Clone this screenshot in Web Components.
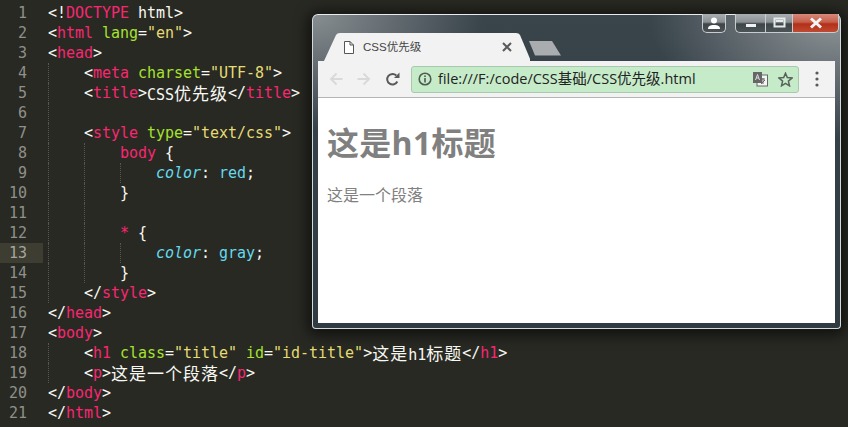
<!DOCTYPE html>
<html lang="zh"><head><meta charset="utf-8"><title>CSS优先级</title>
<style>html,body{margin:0;padding:0;background:#282923;width:848px;height:427px;overflow:hidden}</style>
</head><body>
<app-desktop>
  <code-editor></code-editor>
  <browser-window slot="window" tab="CSS优先级" url="file:///F:/code/CSS基础/CSS优先级.html">
    <page-content></page-content>
  </browser-window>
</app-desktop>
<script>
const LINES=[
 [0,[['p','<!'],['k','DOCTYPE'],['w',' html'],['p','>']]],
 [0,[['p','<'],['k','html'],['a',' lang'],['p','='],['s','"en"'],['p','>']]],
 [0,[['p','<'],['k','head'],['p','>']]],
 [1,[['p','<'],['k','meta'],['a',' charset'],['p','='],['s','"UTF-8"'],['p','>']]],
 [1,[['p','<'],['k','title'],['p','>'],['w','CSS优先级'],['p','</'],['k','title'],['p','>']]],
 [1,[]],
 [1,[['p','<'],['k','style'],['a',' type'],['p','='],['s','"text/css"'],['p','>']]],
 [2,[['k','body'],['w',' {']]],
 [3,[['i','color'],['w',': '],['c','red'],['w',';']]],
 [2,[['w','}']]],
 [2,[]],
 [2,[['k','*'],['w',' {']]],
 [3,[['i','color'],['w',': '],['c','gray'],['w',';']]],
 [2,[['w','}']]],
 [1,[['p','</'],['k','style'],['p','>']]],
 [0,[['p','</'],['k','head'],['p','>']]],
 [0,[['p','<'],['k','body'],['p','>']]],
 [1,[['p','<'],['k','h1'],['a',' class'],['p','='],['s','"title"'],['a',' id'],['p','='],['s','"id-title"'],['p','>'],['w','这是h1标题'],['p','</'],['k','h1'],['p','>']]],
 [1,[['p','<'],['k','p'],['p','>'],['w','这是一个段落'],['p','</'],['k','p'],['p','>']]],
 [0,[['p','</'],['k','body'],['p','>']]],
 [0,[['p','</'],['k','html'],['p','>']]],
];
const esc=s=>s.replace(/&/g,'&amp;').replace(/</g,'&lt;');
const cjk=s=>esc(s).replace(/[\u4e00-\u9fff]+/g,m=>`<span class="z">${m}</span>`);

class AppDesktop extends HTMLElement{
  constructor(){super();this.attachShadow({mode:'open'}).innerHTML=`<style>
  :host{display:block;position:relative;width:848px;height:427px;overflow:hidden;background:#282923}
  ::slotted(browser-window){position:absolute;left:312px;top:14px}
  </style><slot></slot><slot name="window"></slot>`}
}
class CodeEditor extends HTMLElement{
  constructor(){super();
    const rows=LINES.map(([ind,toks],i)=>{
      const guides='<i class="g"></i>'.repeat(ind);
      const code=toks.map(([c,t])=>`<span class="${c}">${cjk(t)}</span>`).join('');
      return `<div class="row${i==12?' cur':''}"><div class="n">${i+1}</div><div class="t">${guides}${code}</div></div>`;
    }).join('');
    this.attachShadow({mode:'open'}).innerHTML=`<style>
    :host{display:block;padding-top:3px;font:15px/20px "DejaVu Sans Mono","Noto Sans CJK SC",monospace;color:#f8f8f2;letter-spacing:-.03px}
    .row{display:flex;height:20px;white-space:pre}
    .n{width:27px;flex:none;text-align:right;color:#8f908a;margin-right:21px;font-size:15px}
    .cur .n{color:#a5a69f}
    .cur{background:linear-gradient(90deg,#3e3d32 0 43px,transparent 43px)}
    .t{display:flex;flex:1}
    .t span{display:inline-block}
    .g{display:block;width:36px;height:20px;flex:none;box-sizing:border-box;border-left:1px dotted #55564f}
    .k{color:#f92672}.a{color:#a6e22e}.s{color:#e6db74}.p,.w{color:#f8f8f2}
    .i{color:#66d9ef;font-style:italic}.c{color:#66d9ef}
    .z{font-family:"Noto Sans CJK SC",sans-serif;font-size:17px;letter-spacing:1px}
    </style>${rows}`;
  }
}
class BrowserWindow extends HTMLElement{
  constructor(){super();
    const tab=this.getAttribute('tab'),url=this.getAttribute('url');
    this.attachShadow({mode:'open'}).innerHTML=`<style>
    :host{display:block;position:relative;width:529px;height:315px;box-sizing:border-box;border-radius:6px 6px 4px 4px;border:1px solid #d3d8da;border-top-color:#e8ecee;
      box-shadow:0 2px 14px 4px rgba(0,0,0,.6);
      background:
       radial-gradient(170px 115px at 0 0,rgba(155,160,163,.8),rgba(155,160,163,0)),
       radial-gradient(190px 125px at 100% 0,rgba(155,160,163,.9),rgba(155,160,163,0)),
       linear-gradient(180deg,#39444b 0,#2f3a41 100%);
      padding:18px 5px 5px 5px;font-family:"Open Sans","Noto Sans CJK SC",sans-serif}
    .strip{position:relative;display:flex;height:28px;align-items:flex-end;padding-left:6px}
    .tab{position:relative;width:206px;height:28px;flex:none}
    .tab svg.shape{position:absolute;inset:0}
    .tabc{position:absolute;inset:0;display:flex;align-items:center;padding-left:20px;box-sizing:border-box}
    .title{font:11.500px/14px "Liberation Sans","Noto Sans CJK SC",sans-serif;color:#444;margin-left:9px;width:139px}
    .newtab{position:absolute;left:210px;top:7px}
    .tool{height:36px;background:#f2f2f2;border-bottom:1px solid #b4b4b4;display:flex;align-items:center;padding-left:11px}
    .nav{display:flex;align-items:center;gap:14px;width:82px;flex:none}
    .box{width:388px;height:27px;box-sizing:border-box;border:1px solid #a9c9ae;border-radius:3px;background:#c6ebc9;display:flex;align-items:center;padding-left:6px;flex:none}
    .url{font:14.500px/20px "Open Sans","Noto Sans CJK SC",sans-serif;color:#222;margin-left:6px;flex:1;white-space:nowrap}
    .icons{display:flex;align-items:center;gap:10px;margin-right:5px}
    .menu{margin-left:16px}
    .page{height:225px;background:#fff}
    .caps{position:absolute;top:-1px;right:1px;display:flex;height:19px;align-items:stretch}
    .cap{box-sizing:border-box;border:1px solid #c9cdcf;border-top:none;display:flex;align-items:center;justify-content:center;background:linear-gradient(180deg,#a8adb0 0,#8b9194 45%,#3d4549 55%,#4d5458 100%)}
    .prof{width:24px;border-radius:0 0 5px 5px;margin-right:9px}
    .min{width:30px;border-radius:0 0 0 5px;border-right:none}
    .max{width:27px;border-right:none}
    .close{width:47px;border-radius:0 0 5px 0;background:linear-gradient(180deg,#d9887a 0,#c4604c 45%,#b42f17 55%,#bf4a33 100%)}
    </style>
    <div class="caps">
      <div class="cap prof"><svg width="14" height="13" viewBox="0 0 14 13"><circle cx="7" cy="3.500" r="3" fill="#fff"/><path d="M1 12c0-3 2-4 6-4s6 1 6 4z" fill="#fff"/></svg></div>
      <div class="cap min"><svg width="14" height="12" viewBox="0 0 14 12"><rect x="2" y="7" width="10" height="3" fill="#eef0f1"/></svg></div>
      <div class="cap max"><svg width="13" height="12" viewBox="0 0 13 12"><rect x="1.500" y="1.500" width="10" height="8" fill="none" stroke="#e6e9ea" stroke-width="2"/><rect x="3" y="3" width="7" height="2" fill="#e6e9ea"/></svg></div>
      <div class="cap close"><svg width="14" height="12" viewBox="0 0 14 12"><path d="M2 1.500L12 10.500M12 1.500L2 10.500" stroke="#f4f4f4" stroke-width="3"/></svg></div>
    </div>
    <div class="strip">
      <div class="tab">
        <svg class="shape" width="206" height="28" viewBox="0 0 206 28"><path d="M0 28L12 2Q13 0 16 0H192Q195 0 196 2L207 28Z" fill="#f2f2f2"/></svg>
        <div class="tabc">
          <svg width="10" height="13" viewBox="0 0 10 13"><path d="M.5.5H6L9.500 4V12.500H.5Z M6 .5V4H9.500" fill="#fff" stroke="#555" stroke-width="1"/></svg>
          <span class="title">${tab}</span>
          <svg width="10" height="10" viewBox="0 0 10 10"><path d="M1 1L9 9M9 1L1 9" stroke="#5a5a5a" stroke-width="2"/></svg>
        </div>
      </div>
      <svg class="newtab" width="34" height="16" viewBox="0 0 34 16"><path d="M1 1H24L33 15.500H7Z" fill="#a9adaf"/></svg>
    </div>
    <div class="tool">
      <div class="nav">
        <svg width="14" height="14" viewBox="0 0 14 14"><path d="M13.500 7H2M7.500 1.500L2 7L7.500 12.500" fill="none" stroke="#d9d9d9" stroke-width="2"/></svg>
        <svg width="14" height="14" viewBox="0 0 14 14"><path d="M.5 7H12M6.500 1.500L12 7L6.500 12.500" fill="none" stroke="#d9d9d9" stroke-width="2"/></svg>
        <svg width="15" height="15" viewBox="0 0 15 15"><path d="M12.300 9.500A5.300 5.300 0 1 1 11.300 3.500" fill="none" stroke="#5a5a5a" stroke-width="2"/><path d="M9 6H14.500V.5Z" fill="#5a5a5a"/></svg>
      </div>
      <div class="box">
        <svg width="14" height="14" viewBox="0 0 14 14"><circle cx="7" cy="7" r="5.800" fill="none" stroke="#4d5a50" stroke-width="1.600"/><rect x="6.200" y="6" width="1.600" height="4.500" fill="#4d5a50"/><rect x="6.200" y="3.400" width="1.600" height="1.600" fill="#4d5a50"/></svg>
        <span class="url">${url}</span>
        <div class="icons">
          <svg width="15" height="15" viewBox="0 0 15 15"><rect x="4" y="3" width="10.500" height="11" fill="#f4f6f4" stroke="#666" stroke-width="1"/><rect x="0" y="0" width="9" height="11" fill="#666"/><path d="M2.500 8L4.500 2.500L6.500 8M3.300 6H5.700" fill="none" stroke="#ddd"/><path d="M7.500 7H12M10 6V12M8 12L12 8" stroke="#666" fill="none"/></svg>
          <svg width="15" height="15" viewBox="0 0 15 15"><path d="M7.500 1.200L9.300 5.600L14 6L10.400 9.100L11.500 13.800L7.500 11.300L3.500 13.800L4.600 9.100L1 6L5.700 5.600Z" fill="none" stroke="#5a625c" stroke-width="1.500"/></svg>
        </div>
      </div>
      <svg class="menu" width="4" height="16" viewBox="0 0 4 16"><circle cx="2" cy="2" r="1.600" fill="#5a5a5a"/><circle cx="2" cy="8" r="1.600" fill="#5a5a5a"/><circle cx="2" cy="14" r="1.600" fill="#5a5a5a"/></svg>
    </div>
    <div class="page"><slot></slot></div>`;
  }
}
class PageContent extends HTMLElement{
  constructor(){super();this.attachShadow({mode:'open'}).innerHTML=`<style>
    :host{display:block;padding:24px 0 0 9px;color:#808080;font-family:"Open Sans","Noto Sans CJK SC",sans-serif}
    h1{margin:0;font:700 32px/42px "Open Sans","Noto Sans CJK SC",sans-serif;letter-spacing:.3px}
    p{margin:19px 0 0;font:16px/22px "Noto Sans CJK SC",sans-serif}
  </style><h1>这是h1标题</h1><p>这是一个段落</p>`}
}
customElements.define('app-desktop',AppDesktop);
customElements.define('code-editor',CodeEditor);
customElements.define('browser-window',BrowserWindow);
customElements.define('page-content',PageContent);
</script>
</body></html>
